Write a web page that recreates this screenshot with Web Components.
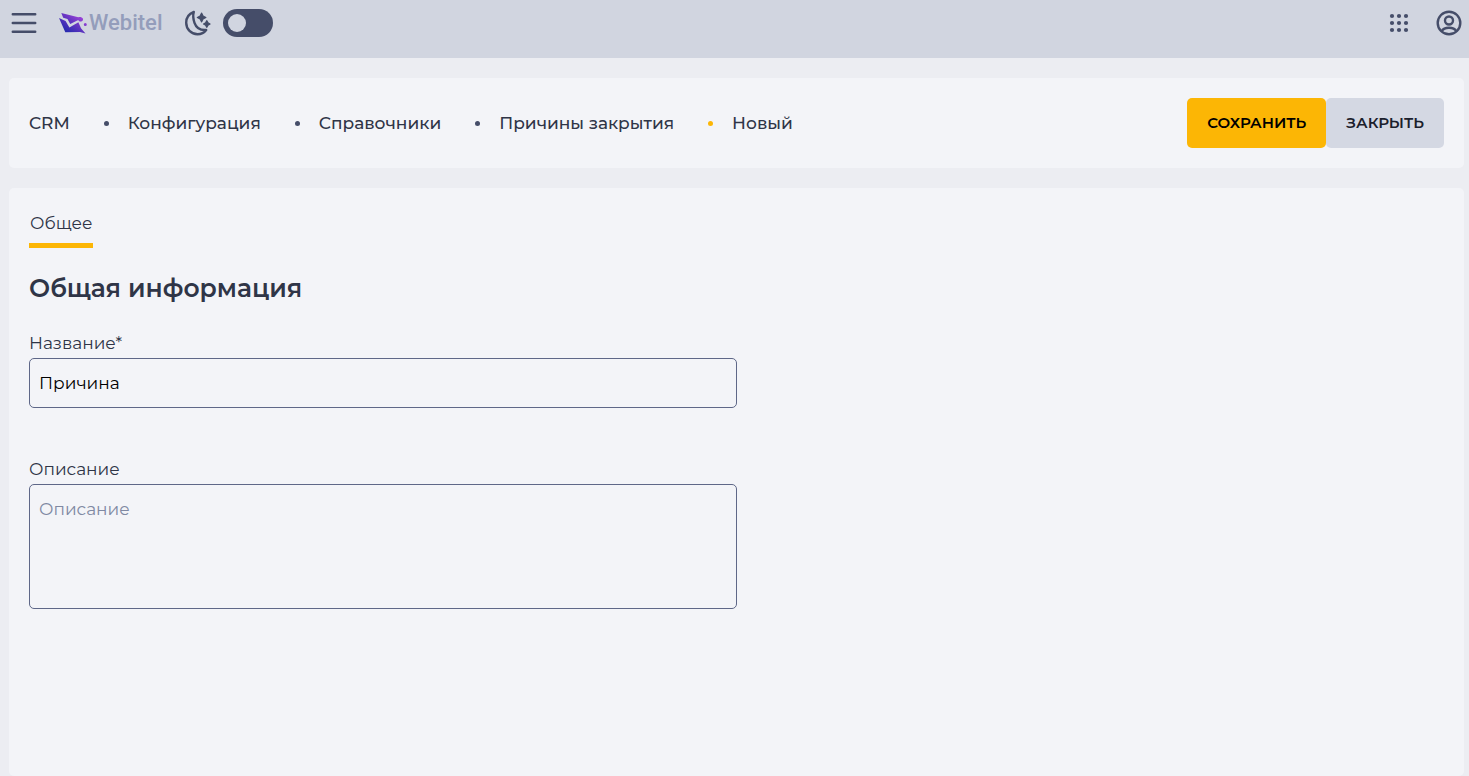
<!DOCTYPE html>
<html lang="ru">
<head>
  <meta charset="utf-8">
  <meta name="viewport" content="width=device-width, initial-scale=1">
  <title>Webitel CRM</title>
  <style>
    :root {
      --main: #fcb605;
      --ink: #2f3547;
      --icon: #454d69;
      --line: #5e6788;
      --muted: #8089a3;
      --bar: #d1d5e0;
      --page: #ecedf2;
      --card: #f3f4f8;
    }

    body {
      margin: 0;
      min-height: 100vh;
      display: flex;
      flex-direction: column;
      background: var(--page);
      color: var(--ink);
      font: 17px/24px Montserrat, Inter, "Open Sans", sans-serif;
    }

    main {
      flex: 1;
      display: flex;
      flex-direction: column;
      gap: 20px;
      padding: 20px 5px 0 9px;
    }

    .fill {
      flex: 1;
    }
  </style>
</head>
<body>
  <app-header></app-header>
  <main>
    <page-card>
      <page-toolbar>
        <bread-crumbs>
          <crumb-item href="#crm">CRM</crumb-item>
          <crumb-item href="#configuration">Конфигурация</crumb-item>
          <crumb-item href="#lookups">Справочники</crumb-item>
          <crumb-item href="#close-reasons">Причины закрытия</crumb-item>
          <crumb-item href="#new" current>Новый</crumb-item>
        </bread-crumbs>
        <wt-button slot="actions" primary>Сохранить</wt-button>
        <wt-button slot="actions">Закрыть</wt-button>
      </page-toolbar>
    </page-card>
    <page-card class="fill">
      <wt-tabs>Общее</wt-tabs>
      <form-section heading="Общая информация">
        <wt-input label="Название*" value="Причина"></wt-input>
        <wt-textarea label="Описание" placeholder="Описание"></wt-textarea>
      </form-section>
    </page-card>
  </main>

  <script>
    // Shared base: puts the styles and the markup of a component in its shadow root
    class BaseElement extends HTMLElement {
      constructor() {
        super();
        this.attachShadow({ mode: 'open' });
      }

      connectedCallback() {
        this.shadowRoot.innerHTML = `
          <style>:host, * { box-sizing: border-box; } ${this.styles()}</style>
          ${this.render()}
        `;
      }

      styles() {
        return ':host { display: block; }';
      }

      render() {
        return '<slot></slot>';
      }
    }

    class AppHeader extends BaseElement {
      styles() {
        return `
          :host {
            display: flex;
            align-items: flex-start;
            justify-content: space-between;
            height: 58px;
            padding: 8px 5px 0 9px;
            background: var(--bar);
            color: var(--icon);
          }

          div {
            display: flex;
            align-items: center;
            height: 30px;
          }

          .right {
            gap: 20px;
          }

          button {
            display: flex;
            padding: 0;
            border: 0;
            background: none;
            color: inherit;
          }

          svg {
            display: block;
          }

          wt-logo {
            margin: 0 20px;
          }

          wt-switcher {
            margin-left: 10px;
          }
        `;
      }

      render() {
        return `
          <div>
            <button type="button" aria-label="Меню">
              <svg width="30" height="30" viewBox="0 0 30 30" fill="none" stroke="currentColor" stroke-width="2.5" stroke-linecap="round">
                <path d="M3.8 6.2h22.4M3.8 15h22.4M3.8 23.8h22.4"/>
              </svg>
            </button>
            <wt-logo></wt-logo>
            <svg width="30" height="30" viewBox="0 0 30 30" aria-hidden="true">
              <path d="M10.8 4C6.2 5.7 3.2 10 3.2 14.8c0 6.4 5 11.4 11.3 11.4 3.6 0 6.7-1.5 8.7-4.2-5.6.5-10-2.4-11.7-7.2-1.3-3.7-1.7-7.5-.7-10.8z" fill="none" stroke="currentColor" stroke-width="2.4" stroke-linejoin="round"/>
              <path d="M18.6 5.2l1.4 2.8 2.8 1.5-2.8 1.5-1.4 2.8-1.4-2.8-2.8-1.5 2.8-1.5zM23.8 12.8l1.1 2.1 2.1 1.1-2.1 1.1-1.1 2.1-1.1-2.1-2.1-1.1 2.1-1.1z" fill="currentColor" stroke="currentColor" stroke-width="1.4" stroke-linejoin="round"/>
            </svg>
            <wt-switcher></wt-switcher>
          </div>
          <div class="right">
            <button type="button" aria-label="Приложения">
              <svg width="30" height="30" viewBox="0 0 30 30" fill="currentColor">
                <circle cx="8" cy="8" r="2.1"/><circle cx="15" cy="8" r="2.1"/><circle cx="22" cy="8" r="2.1"/>
                <circle cx="8" cy="15" r="2.1"/><circle cx="15" cy="15" r="2.1"/><circle cx="22" cy="15" r="2.1"/>
                <circle cx="8" cy="22" r="2.1"/><circle cx="15" cy="22" r="2.1"/><circle cx="22" cy="22" r="2.1"/>
              </svg>
            </button>
            <button type="button" aria-label="Профиль">
              <svg width="30" height="30" viewBox="0 0 30 30" fill="none" stroke="currentColor" stroke-width="2.4">
                <circle cx="15" cy="15" r="11.3"/>
                <circle cx="15" cy="12.5" r="4"/>
                <path d="M7.5 23.3c1.5-2.5 4.2-3.5 7.5-3.5s6 1 7.5 3.5"/>
              </svg>
            </button>
          </div>
        `;
      }
    }

    class WtLogo extends BaseElement {
      styles() {
        return `
          a {
            display: flex;
            align-items: center;
            gap: 1px;
            color: #949dbb;
            font: 500 22px/30px Roboto, sans-serif;
            text-decoration: none;
          }

          svg {
            display: block;
          }
        `;
      }

      render() {
        return `
          <a href="#home">
            <svg width="29" height="22" viewBox="0 0 29 22" aria-hidden="true">
              <defs>
                <linearGradient id="g" x1="0" y1="1" x2="1" y2="0">
                  <stop offset=".2" stop-color="#2b2bb0"/>
                  <stop offset=".55" stop-color="#6a35c4"/>
                  <stop offset="1" stop-color="#c44fe8"/>
                </linearGradient>
              </defs>
              <path fill="url(#g)" d="M2.3 1l17 4.3c1.5-.6 3.9-.2 4.6 1.3.6 1.6-.4 3-2 3-1.3 0-2.2-.6-2.6-1.6L11.2 12 8.5 7 4.2 5.8zM0 6l6.6 3 3.8 6.6 9-5.4 2.6 6 4.5 5.2-5.5-1.4L6.3 20.3zM26.3 11a1.5 1.5 0 1 1 0 3 1.5 1.5 0 0 1 0-3z"/>
            </svg>
            <span>Webitel</span>
          </a>
        `;
      }
    }

    class WtSwitcher extends BaseElement {
      styles() {
        return `
          :host {
            display: flex;
          }

          input {
            appearance: none;
            display: flex;
            align-items: center;
            width: 50px;
            height: 28px;
            margin: 0;
            padding: 5px;
            border-radius: 14px;
            background: var(--icon);
          }

          input::before {
            content: "";
            width: 18px;
            height: 18px;
            border-radius: 50%;
            background: var(--bar);
          }

          input:checked {
            justify-content: flex-end;
          }
        `;
      }

      render() {
        return '<input type="checkbox" role="switch" aria-label="Тёмная тема">';
      }
    }

    class PageCard extends BaseElement {
      styles() {
        return `
          :host {
            display: block;
            padding: 20px;
            border-radius: 5px;
            background: var(--card);
          }
        `;
      }
    }

    class PageToolbar extends BaseElement {
      styles() {
        return `
          :host, div {
            display: flex;
            align-items: center;
          }

          :host {
            justify-content: space-between;
          }
        `;
      }

      render() {
        return '<slot></slot><div><slot name="actions"></slot></div>';
      }
    }

    class BreadCrumbs extends BaseElement {
      styles() {
        return `
          nav {
            display: flex;
            flex-wrap: wrap;
            gap: 34px;
          }
        `;
      }

      render() {
        return '<nav aria-label="Навигация"><slot></slot></nav>';
      }
    }

    class CrumbItem extends BaseElement {
      styles() {
        return `
          :host {
            display: flex;
            align-items: center;
            gap: 19px;
            font-weight: 500;
          }

          :host(:not(:first-child))::before {
            content: "";
            width: 5px;
            height: 5px;
            border-radius: 50%;
            background: var(--icon);
          }

          :host([current])::before {
            background: var(--main) !important;
          }

          a {
            color: inherit;
            text-decoration: none;
          }
        `;
      }

      render() {
        return `<a href="${this.getAttribute('href')}"><slot></slot></a>`;
      }
    }

    class WtButton extends BaseElement {
      styles() {
        return `
          button {
            height: 50px;
            padding: 0 20px;
            border: 0;
            border-radius: 5px;
            background: #d4d8e3;
            color: #1b202c;
            font: inherit;
            font-size: 15px;
            font-weight: 600;
            text-transform: uppercase;
          }

          :host([primary]) button {
            background: var(--main);
            color: #000;
          }
        `;
      }

      render() {
        return '<button type="button"><slot></slot></button>';
      }
    }

    class WtTabs extends BaseElement {
      styles() {
        return `
          div {
            display: flex;
          }

          button {
            padding: 3px 1px 8px;
            border: 0;
            border-bottom: 5px solid var(--main);
            background: none;
            color: inherit;
            font: inherit;
          }
        `;
      }

      render() {
        return '<div role="tablist"><button type="button" role="tab" aria-selected="true"><slot></slot></button></div>';
      }
    }

    class FormSection extends BaseElement {
      styles() {
        return `
          h2 {
            margin: 24px 0 27px;
            font-size: 25px;
            line-height: 32px;
            font-weight: 600;
          }

          div {
            display: grid;
            grid-template-columns: 1fr 1fr;
            row-gap: 49px;
          }

          ::slotted(*) {
            grid-column: 1;
          }
        `;
      }

      render() {
        return `<h2>${this.getAttribute('heading')}</h2><div><slot></slot></div>`;
      }
    }

    // Styles that both kinds of text field share
    const fieldStyles = `
      :host {
        display: block;
      }

      label {
        display: block;
        margin-bottom: 3px;
      }

      input, textarea {
        display: block;
        width: 100%;
        border: 1px solid var(--line);
        border-radius: 5px;
        outline: 0;
        background: transparent;
        color: #000;
        font: inherit;
      }

      ::placeholder {
        color: var(--muted);
        opacity: 1;
      }
    `;

    class WtInput extends BaseElement {
      styles() {
        return `${fieldStyles}
          input {
            height: 50px;
            padding: 0 9px;
          }
        `;
      }

      render() {
        return `
          <label for="field">${this.getAttribute('label')}</label>
          <input id="field" type="text" value="${this.getAttribute('value')}" required>
        `;
      }
    }

    class WtTextarea extends BaseElement {
      styles() {
        return `${fieldStyles}
          textarea {
            height: 125px;
            padding: 12px 9px;
            resize: none;
          }
        `;
      }

      render() {
        return `
          <label for="field">${this.getAttribute('label')}</label>
          <textarea id="field" placeholder="${this.getAttribute('placeholder')}"></textarea>
        `;
      }
    }

    customElements.define('app-header', AppHeader);
    customElements.define('wt-logo', WtLogo);
    customElements.define('wt-switcher', WtSwitcher);
    customElements.define('page-card', PageCard);
    customElements.define('page-toolbar', PageToolbar);
    customElements.define('bread-crumbs', BreadCrumbs);
    customElements.define('crumb-item', CrumbItem);
    customElements.define('wt-button', WtButton);
    customElements.define('wt-tabs', WtTabs);
    customElements.define('form-section', FormSection);
    customElements.define('wt-input', WtInput);
    customElements.define('wt-textarea', WtTextarea);
  </script>
</body>
</html>
